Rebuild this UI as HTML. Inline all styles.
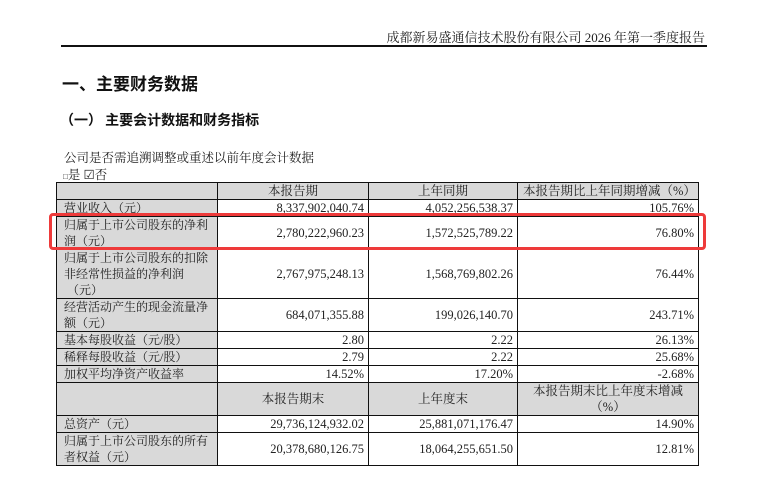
<!DOCTYPE html>
<html><head><meta charset="utf-8"><style>
body{margin:0;width:762px;height:483px;background:#fff;position:relative;overflow:hidden;font-family:"Liberation Serif","Noto Serif CJK SC",serif;color:#222;}
.a{position:absolute;white-space:nowrap;}
table{position:absolute;left:56px;top:182px;border-collapse:collapse;table-layout:fixed;font-size:12.5px;}
td{border:1.3px solid #111;padding:0 5px;line-height:16px;vertical-align:middle;overflow:hidden;}
td.l{background:#d9d9d9;text-align:left;padding-left:7px;padding-right:2px;font-size:12px;}
td.h{background:#d9d9d9;text-align:center;}
td.r{text-align:right;padding-right:4px;}
</style></head><body>
<div class="a" style="right:57px;top:27px;font-size:13px;">成都新易盛通信技术股份有限公司 2026 年第一季度报告</div>
<div class="a" style="left:61px;top:45px;width:646px;height:1.5px;background:#111;"></div>
<div class="a" style="left:62px;top:70px;font-size:17px;font-weight:bold;font-family:'Noto Sans CJK SC',sans-serif;color:#111;">一、主要财务数据</div>
<div class="a" style="left:60px;top:110px;font-size:14px;font-weight:bold;font-family:'Noto Sans CJK SC',sans-serif;color:#111;">（一） 主要会计数据和财务指标</div>
<div class="a" style="left:64px;top:148px;font-size:12.5px;">公司是否需追溯调整或重述以前年度会计数据</div>
<div class="a" style="left:63px;top:165px;font-size:12.5px;"><span style="font-size:8px">□</span>是 ☑否</div>
<table>
<colgroup><col style="width:161px"><col style="width:151px"><col style="width:149px"><col style="width:181px"></colgroup>
<tr style="height:17px"><td class="h"></td><td class="h">本报告期</td><td class="h">上年同期</td><td class="h">本报告期比上年同期增减（%）</td></tr>
<tr style="height:16px"><td class="l">营业收入（元）</td><td class="r">8,337,902,040.74</td><td class="r">4,052,256,538.37</td><td class="r">105.76%</td></tr>
<tr style="height:33px"><td class="l">归属于上市公司股东的净利润（元）</td><td class="r">2,780,222,960.23</td><td class="r">1,572,525,789.22</td><td class="r">76.80%</td></tr>
<tr style="height:48px"><td class="l">归属于上市公司股东的扣除非经常性损益的净利润<br>&nbsp;（元）</td><td class="r">2,767,975,248.13</td><td class="r">1,568,769,802.26</td><td class="r">76.44%</td></tr>
<tr style="height:32px"><td class="l">经营活动产生的现金流量净额（元）</td><td class="r">684,071,355.88</td><td class="r">199,026,140.70</td><td class="r">243.71%</td></tr>
<tr style="height:17px"><td class="l">基本每股收益（元/股）</td><td class="r">2.80</td><td class="r">2.22</td><td class="r">26.13%</td></tr>
<tr style="height:17px"><td class="l">稀释每股收益（元/股）</td><td class="r">2.79</td><td class="r">2.22</td><td class="r">25.68%</td></tr>
<tr style="height:15px"><td class="l">加权平均净资产收益率</td><td class="r">14.52%</td><td class="r">17.20%</td><td class="r">-2.68%</td></tr>
<tr style="height:32px"><td class="h"></td><td class="h">本报告期末</td><td class="h">上年度末</td><td class="h" style="padding:0 14px">本报告期末比上年度末增减（%）</td></tr>
<tr style="height:17px"><td class="l">总资产（元）</td><td class="r">29,736,124,932.02</td><td class="r">25,881,071,176.47</td><td class="r">14.90%</td></tr>
<tr style="height:32px"><td class="l">归属于上市公司股东的所有者权益（元）</td><td class="r">20,378,680,126.75</td><td class="r">18,064,255,651.50</td><td class="r">12.81%</td></tr>
</table>
<div class="a" style="left:49px;top:213px;width:651px;height:31px;border:3px solid #ee3a3a;border-radius:4px;"></div>
</body></html>
